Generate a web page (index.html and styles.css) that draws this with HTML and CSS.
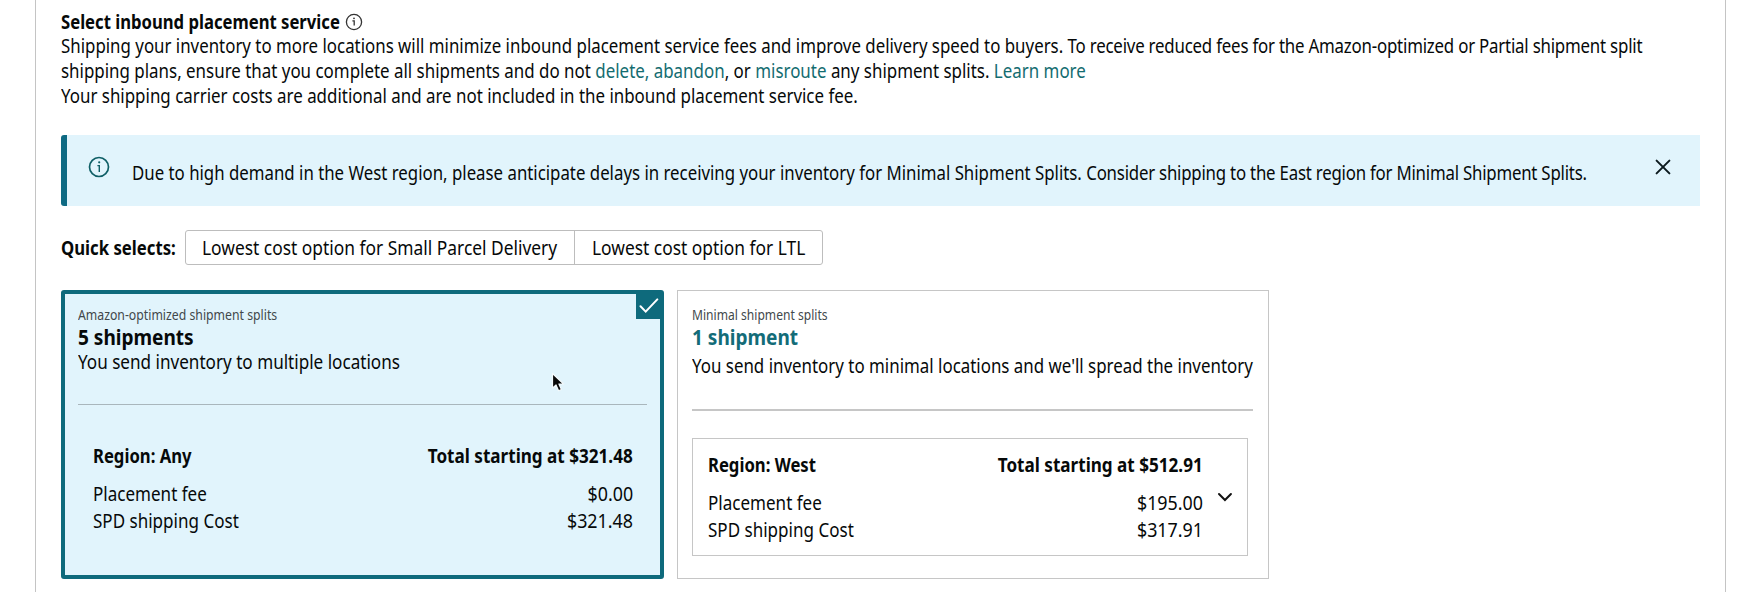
FILE: index.html
```
<!DOCTYPE html>
<html lang="en">

<head>
    <meta charset="UTF-8">
    <meta name="viewport" content="width=device-width, initial-scale=1.0">
    <title>Inbound placement service</title>
    <link rel="stylesheet" href="styles.css">
</head>

<body>
    <main class="panel">
        <section class="intro">
            <h1 class="title">
                <span class="title-text">Select inbound placement service</span>
                <svg class="title-icon" width="18" height="18" viewBox="0 0 18 18">
                    <circle cx="9" cy="9" r="7.6" fill="none" stroke="#333" stroke-width="1.3" />
                    <path d="M7.4 7.8h1.8v4.8" fill="none" stroke="#333" stroke-width="1.3" />
                    <circle cx="9" cy="5.3" r="0.9" fill="#333" />
                </svg>
            </h1>
            <p class="line line-1">Shipping your inventory to more locations will minimize inbound placement service fees and improve delivery speed to buyers. <span class="tight">To receive reduced fees for the Amazon-optimized or Partial shipment split</span></p>
            <p class="line">shipping plans, ensure that you complete all shipments and do not <a href="#">delete,</a> <a href="#">abandon</a>, or <a href="#">misroute</a> any shipment splits. <a href="#">Learn more</a></p>
            <p class="line">Your shipping carrier costs are additional and are not included in the inbound placement service fee.</p>
        </section>

        <div class="alert" role="alert">
            <svg class="alert-icon" width="22" height="22" viewBox="0 0 22 22">
                <circle cx="11" cy="11" r="9.5" fill="none" stroke="#0f5f66" stroke-width="1.7" />
                <path d="M9.4 9.6h1.9v6.4" fill="none" stroke="#0f5f66" stroke-width="1.4" />
                <circle cx="11.2" cy="6.3" r="1.1" fill="#0f5f66" />
            </svg>
            <p class="alert-text">Due to high demand in the West region, please anticipate delays in receiving your inventory for Minimal Shipment Splits. <span class="tight">Consider shipping to the East region for Minimal Shipment Splits.</span></p>
            <svg class="alert-close" width="16" height="16" viewBox="0 0 16 16">
                <path d="M1.6 1.6L14.4 14.4M14.4 1.6L1.6 14.4" fill="none" stroke="#0c1a1e" stroke-width="2" stroke-linecap="round" />
            </svg>
        </div>

        <div class="quick">
            <span class="quick-label">Quick selects:</span>
            <div class="quick-buttons">
                <button type="button" class="quick-parcel"><span>Lowest cost option for Small Parcel Delivery</span></button>
                <button type="button" class="quick-ltl"><span>Lowest cost option for LTL</span></button>
            </div>
        </div>

        <div class="cards">
            <!-- selected option -->
            <article class="card selected">
                <div class="badge">
                    <svg width="20" height="16" viewBox="0 0 20 16">
                        <path d="M1.5 8.3L6.7 13.6L18.3 1.4" fill="none" stroke="#fff" stroke-width="2" stroke-linecap="round" />
                    </svg>
                </div>
                <p class="kind">Amazon-optimized shipment splits</p>
                <h2 class="count">5 shipments</h2>
                <p class="desc">You send inventory to multiple locations</p>
                <hr>
                <div class="fees">
                    <div class="fee total"><span>Region: Any</span><span>Total starting at $321.48</span></div>
                    <div class="fee"><span>Placement fee</span><span>$0.00</span></div>
                    <div class="fee"><span>SPD shipping Cost</span><span>$321.48</span></div>
                </div>
            </article>

            <article class="card minimal">
                <p class="kind">Minimal shipment splits</p>
                <h2 class="count">1 shipment</h2>
                <p class="desc">You send inventory to minimal locations and we'll spread the inventory</p>
                <hr>
                <div class="region-box">
                    <div class="fees">
                        <div class="fee total"><span>Region: West</span><span>Total starting at $512.91</span></div>
                        <div class="fee"><span>Placement fee</span><span>$195.00</span></div>
                        <div class="fee"><span>SPD shipping Cost</span><span>$317.91</span></div>
                    </div>
                    <svg class="chevron" width="16" height="10" viewBox="0 0 16 10">
                        <path d="M2 2L8 8L14 2" fill="none" stroke="#111" stroke-width="2" stroke-linecap="round" />
                    </svg>
                </div>
            </article>
        </div>

        <!-- mouse pointer -->
        <svg class="pointer" width="16" height="22" viewBox="0 0 16 22">
            <path d="M1.5 1.5V16.2L5 13L7.6 18.8L10.4 17.5L7.9 12H12.6Z" fill="#0a0a0a" stroke="#f4fafc" stroke-width="1.2" stroke-linejoin="round" />
        </svg>
    </main>
</body>

</html>
```
FILE: styles.css
```
* {
    box-sizing: border-box;
}
body {
    margin: 0;
    height: 592px;
    overflow: hidden;
    background: #fff;
    color: #060909;
    font-family: "Noto Sans", "Open Sans", sans-serif;
    font-size: 20px;
    line-height: 25px;
}
h1, h2, p {
    margin: 0;
    font-size: 20px;
    white-space: nowrap;
}
a {
    color: #136c70;
    text-decoration: none;
}
.panel {
    width: 1691px;
    height: 592px;
    margin-left: 35px;
    padding: 9.5px 25px 0;
    border-left: 1px solid #c4c4c4;
    border-right: 1px solid #c4c4c4;
}

/* the text face is drawn narrower than its natural width */
.title-text, .line, .alert-text, .quick-label, .quick-buttons span,
.kind, .count, .desc, .fee span {
    transform: scaleX(0.852);
    transform-origin: 0 50%;
    white-space: nowrap;
}
.tight {
    letter-spacing: -0.25px;
}

/* intro */
.intro {
    height: 125.5px;
    line-height: 24.9px;
}
.title {
    display: flex;
    align-items: center;
}
.title-text {
    width: 284px;
    transform: scaleX(0.833);
}
.title-icon {
    flex: none;
}
.intro .line {
    transform: scaleX(0.8457);
}
.intro .line-1 {
    transform: scaleX(0.843);
}

/* alert */
.alert {
    display: flex;
    width: 1639px;
    height: 71px;
    padding: 21px 29px 0 21px;
    background: #e1f4fc;
    border-left: 6px solid #0e6a83;
    border-radius: 3px 0 0 3px;
}
.alert-icon {
    flex: none;
}
.alert-text {
    width: 1480px;
    margin: 4px 0 0 21.5px;
    transform: scaleX(0.8407);
}
.alert-close {
    flex: none;
    margin: 3px 0 0 auto;
}

/* quick selects */
.quick {
    display: flex;
    align-items: center;
    height: 34px;
    margin-top: 24px;
}
.quick-label {
    width: 124px;
    font-weight: 700;
    transform: scaleX(0.836);
}
.quick-buttons {
    display: flex;
    height: 35px;
    border: 1px solid #bdbdbd;
    border-radius: 3px;
}
.quick-buttons button {
    padding: 0 0 0 16px;
    overflow: hidden;
    border: 0;
    background: none;
    color: inherit;
    font: inherit;
    text-align: left;
}
.quick-buttons span {
    display: block;
    transform: scaleX(0.869);
}
.quick-parcel {
    width: 388px;
}
.quick-buttons .quick-ltl {
    width: 248px;
    padding-left: 17px;
    border-left: 1px solid #bdbdbd;
}

/* option cards */
.cards {
    display: flex;
    gap: 13px;
    margin-top: 26px;
}
.card {
    position: relative;
    height: 289px;
}
.selected {
    width: 603px;
    padding: 11px 13px 0;
    background: #e1f4fc;
    border: 4px solid #0e6a7c;
    border-radius: 3px;
}
.minimal {
    width: 592px;
    padding: 14px 15px 0 14px;
    border: 1px solid #c6c6c6;
}
.badge {
    position: absolute;
    top: -1px;
    right: -1px;
    display: flex;
    align-items: center;
    justify-content: center;
    width: 25px;
    height: 26px;
    background: #0e6a7c;
}
.kind {
    height: 20px;
    color: #41484b;
    font-size: 14.2px;
    line-height: 20px;
    transform: scaleX(0.864);
}
.minimal .kind {
    transform: scaleX(0.852);
}
.count {
    height: 24px;
    font-size: 21px;
    line-height: 24px;
    transform: scaleX(0.907);
}
.minimal .count {
    color: #136c78;
}
.desc {
    transform: scaleX(0.855);
}
.minimal .desc {
    margin-top: 4px;
    transform: scaleX(0.845);
}
hr {
    margin: 30px 0 0;
    border: 0;
    border-top: 1px solid #a9b6bc;
}
.minimal hr {
    margin-top: 31px;
    border-top: 2px solid #c6c6c6;
}

/* fees */
.fee {
    display: flex;
    justify-content: space-between;
    height: 27.3px;
    line-height: 27.3px;
}
.fee span:last-child {
    transform: scaleX(0.893);
    transform-origin: 100% 50%;
}
.total {
    height: 37.5px;
    font-weight: 700;
}
.total span:first-child {
    transform: scaleX(0.833);
}
.total span:last-child {
    transform: scaleX(0.855);
}
.selected .fees {
    padding: 37px 14px 0 15px;
}
.region-box {
    display: flex;
    width: 556px;
    height: 118px;
    margin-top: 27px;
    padding: 12px 14px 0 15px;
    border: 1px solid #c6c6c6;
}
.region-box .fees {
    width: 496.5px;
}
.chevron {
    margin: 41px 0 0 14.5px;
}

.pointer {
    position: absolute;
    left: 551px;
    top: 372px;
}
```
